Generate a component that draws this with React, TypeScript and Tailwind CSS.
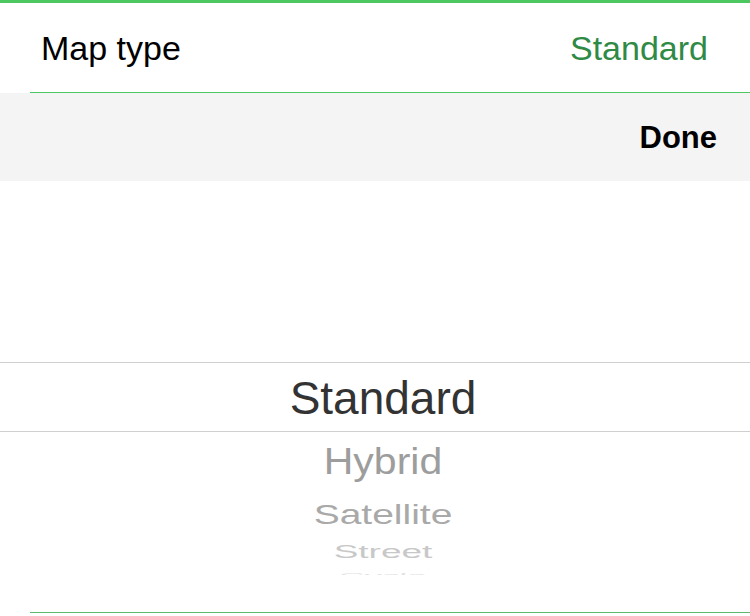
import React from 'react';

const font = { fontFamily: '"Liberation Sans", Arial, sans-serif' };

const PickerItem: React.FC<{ label: string; className: string; textClass: string }> = ({ label, className, textClass }) => (
  <div className={`flex items-center justify-center shrink-0 ${className}`}>
    <span className={`leading-none whitespace-nowrap ${textClass}`}>{label}</span>
  </div>
);

const App: React.FC = () => {
  return (
    <div className="w-[750px] h-[616px] bg-white overflow-hidden flex flex-col" style={font}>
      {/* top accent */}
      <div className="h-[3px] bg-[#4dc760] shrink-0" />

      {/* setting row */}
      <div className="h-[89px] shrink-0 flex items-center justify-between pl-[41px] pr-[42px]">
        <span className="text-[34px] text-black leading-none">Map type</span>
        <span className="text-[34px] text-[#2f8a45] leading-none">Standard</span>
      </div>
      <div className="ml-[30px] h-px bg-[#4dc760] shrink-0" />

      {/* toolbar */}
      <div className="h-[88px] shrink-0 bg-[#f4f4f4] flex items-center justify-end pr-[33px]">
        <span className="text-[31px] font-bold text-black leading-none">Done</span>
      </div>

      {/* picker */}
      <div className="flex flex-col pl-[16px] shrink-0">
        <div className="h-[181px]" />
        <div className="h-px bg-[#cfcfcf] -ml-[16px]" />
        <PickerItem label="Standard" className="h-[68px] pt-[2px]" textClass="text-[46px] text-[#333333]" />
        <div className="h-px bg-[#cfcfcf] -ml-[16px]" />
        <div className="h-[143px] overflow-hidden flex flex-col">
          <PickerItem label="Hybrid" className="h-[60px]" textClass="text-[41px] text-[#9d9d9d] scale-y-[0.88]" />
          <PickerItem label="Satellite" className="h-[45px]" textClass="text-[39px] text-[#a9a9a9] scale-y-[0.72]" />
          <PickerItem label="Street" className="h-[30px]" textClass="text-[37px] text-[#c8c8c8] scale-y-[0.48]" />
          <PickerItem label="Cycle" className="h-[16px]" textClass="text-[35px] text-[#e2e2e2] scale-y-[0.22]" />
        </div>
        <div className="h-[37px]" />
      </div>
      <div className="ml-[30px] h-px bg-[#5cb86b] shrink-0" />
    </div>
  );
};

export default App;
